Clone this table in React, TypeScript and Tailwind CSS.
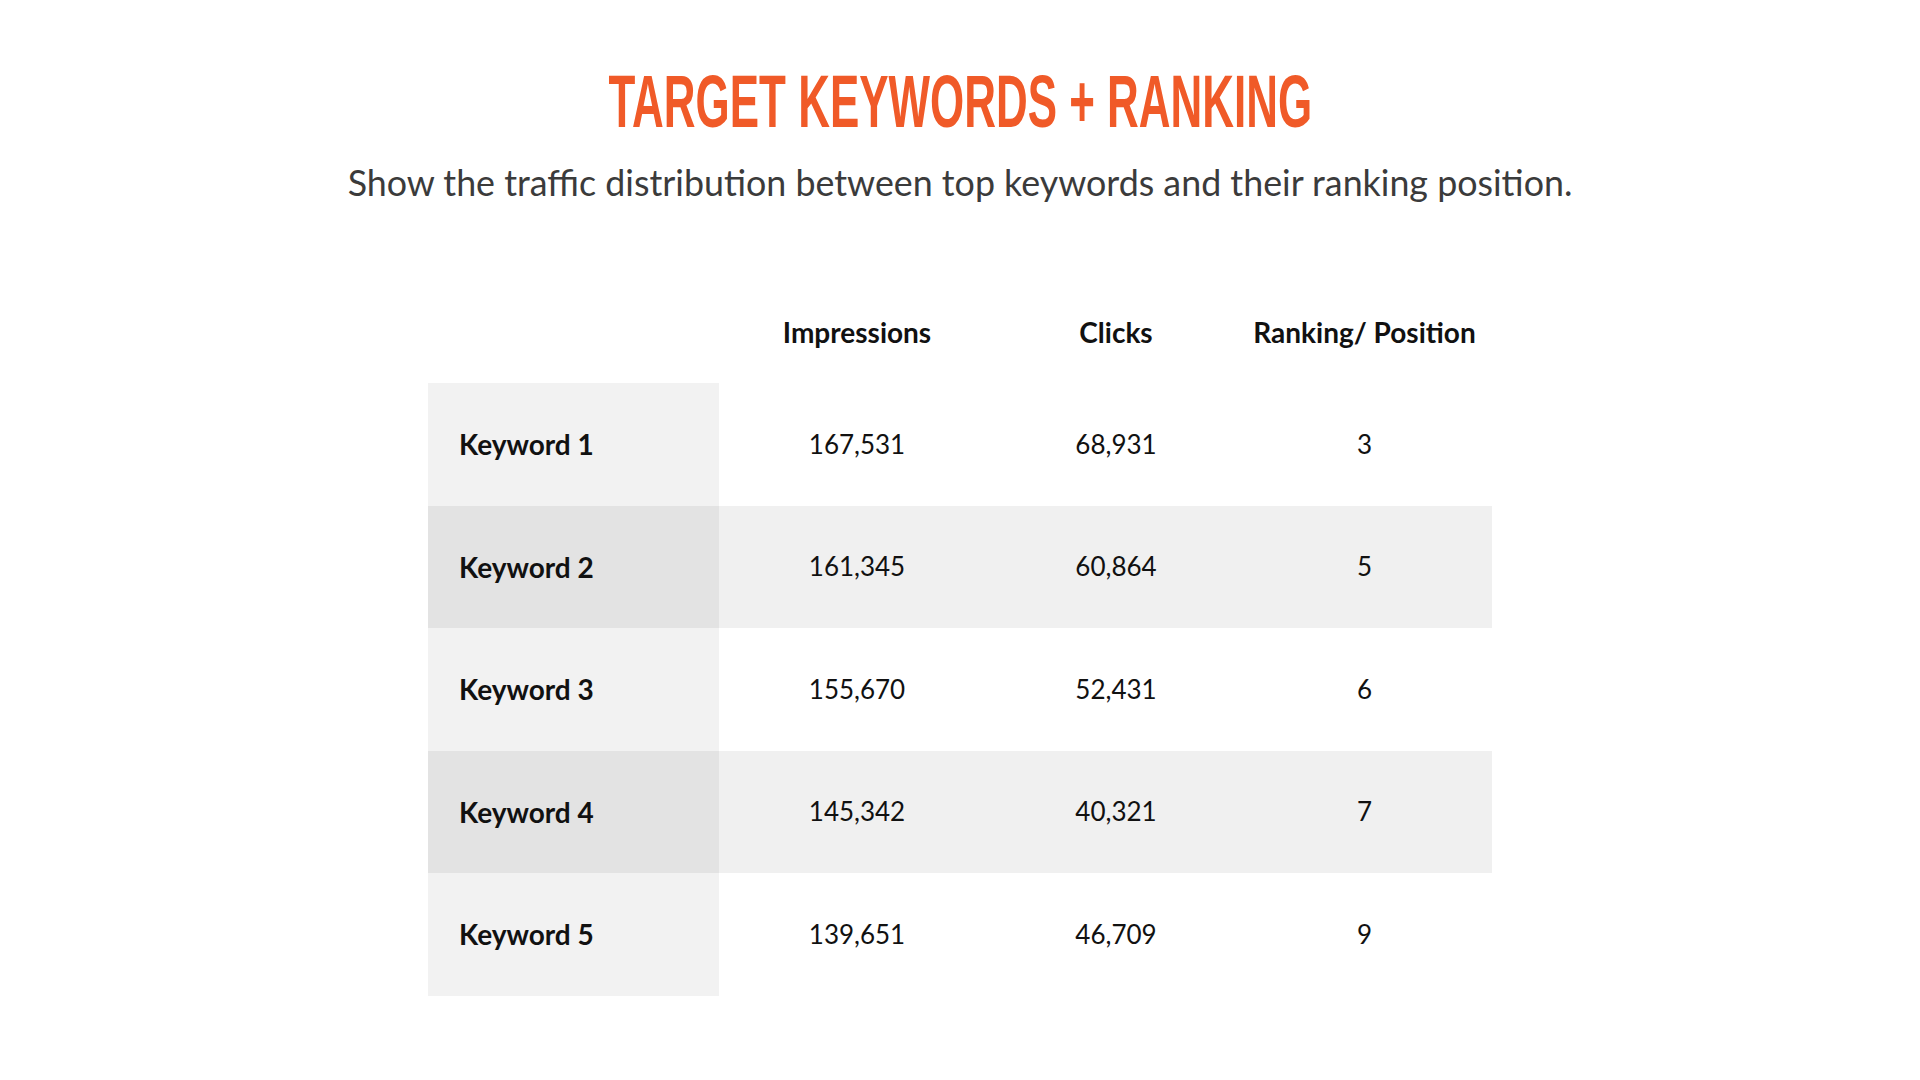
const rows = [
  { name: "Keyword 1", impressions: "167,531", clicks: "68,931", rank: "3" },
  { name: "Keyword 2", impressions: "161,345", clicks: "60,864", rank: "5" },
  { name: "Keyword 3", impressions: "155,670", clicks: "52,431", rank: "6" },
  { name: "Keyword 4", impressions: "145,342", clicks: "40,321", rank: "7" },
  { name: "Keyword 5", impressions: "139,651", clicks: "46,709", rank: "9" },
];

const body = "font-['Lato','Noto_Sans',sans-serif]";

export default function App() {
  return (
    <div className={`w-full h-[1080px] bg-white flex flex-col items-center ${body}`}>
      {/* Title */}
      <h1 className="mt-[62px] h-[80px] flex items-center justify-center">
        <span className="inline-block scale-x-[0.594] font-['Liberation_Sans_Narrow','Liberation_Sans',sans-serif] font-bold text-[74px] leading-none text-[#f05a28] whitespace-nowrap">
          TARGET KEYWORDS + RANKING
        </span>
      </h1>
      <p className="mt-[19px] text-[35.8px] leading-[44px] text-[#3b3b3b]">
        Show the traffic distribution between top keywords and their ranking position.
      </p>

      {/* Table */}
      <div className="mt-[102px] w-[1064px]">
        <div className="grid grid-cols-[291px_276px_242px_255px] h-[50px] items-center text-[28px] font-bold text-[#111]">
          <div />
          <div className="text-center">Impressions</div>
          <div className="text-center">Clicks</div>
          <div className="text-center">Ranking/ Position</div>
        </div>
        <div className="mt-[26px]">
          {rows.map((r, i) => {
            const even = i % 2 === 1;
            return (
              <div
                key={r.name}
                className={`grid grid-cols-[291px_276px_242px_255px] h-[122.5px] items-center text-[26px] text-[#111] ${even ? "bg-[#f0f0f0]" : "bg-white"}`}
              >
                <div className={`h-full flex items-center pl-[31px] text-[28px] font-bold ${even ? "bg-[#e3e3e3]" : "bg-[#f2f2f2]"}`}>
                  {r.name}
                </div>
                <div className="text-center">{r.impressions}</div>
                <div className="text-center">{r.clicks}</div>
                <div className="text-center">{r.rank}</div>
              </div>
            );
          })}
        </div>
      </div>
    </div>
  );
}
